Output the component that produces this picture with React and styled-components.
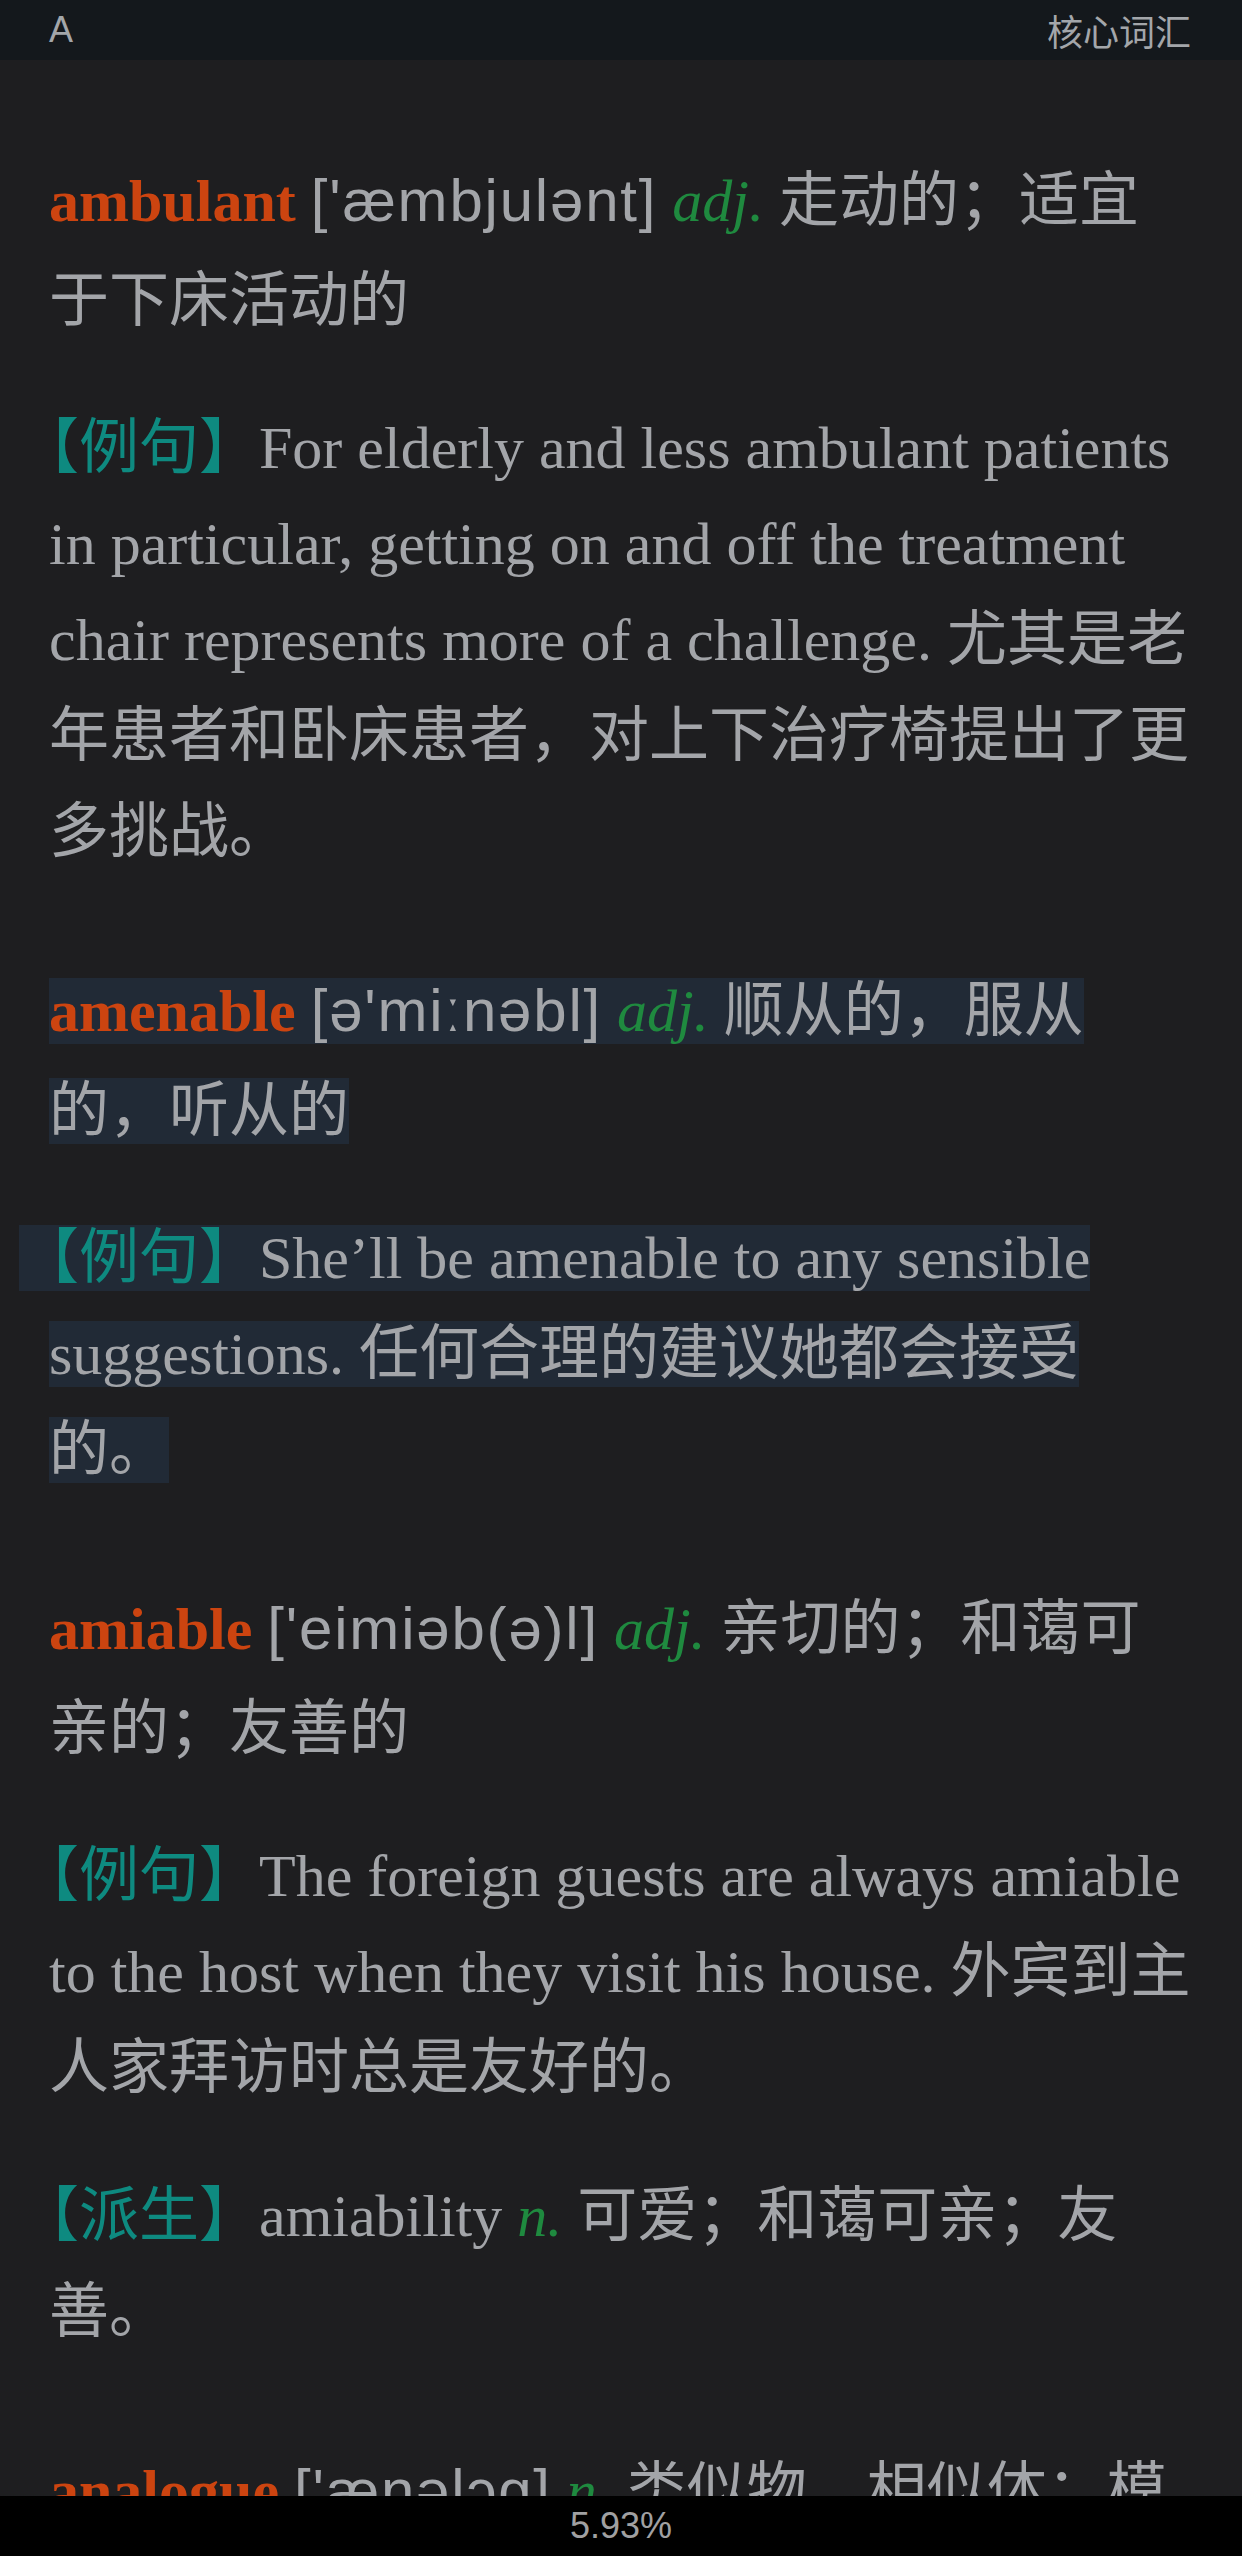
import React from 'react';
import styled, { createGlobalStyle } from 'styled-components';

const GlobalStyle = createGlobalStyle`
  html, body {
    margin: 0;
    padding: 0;
    background: #1e1e20;
  }
`;

const entries = [
  {
    id: 'ambulant',
    word: 'ambulant',
    phonetic: "['æmbjulənt]",
    pos: 'adj.',
    meaning: '走动的；适宜于下床活动的',
    notes: [
      {
        tag: '例句',
        text: 'For elderly and less ambulant patients in particular, getting on and off the treatment chair represents more of a challenge. 尤其是老年患者和卧床患者，对上下治疗椅提出了更多挑战。',
      },
    ],
  },
  {
    id: 'amenable',
    word: 'amenable',
    phonetic: "[ə'miːnəbl]",
    pos: 'adj.',
    meaning: '顺从的，服从的，听从的',
    selected: true,
    notes: [
      {
        tag: '例句',
        text: 'She’ll be amenable to any sensible suggestions. 任何合理的建议她都会接受的。',
      },
    ],
  },
  {
    id: 'amiable',
    word: 'amiable',
    phonetic: "['eimiəb(ə)l]",
    pos: 'adj.',
    meaning: '亲切的；和蔼可亲的；友善的',
    notes: [
      {
        tag: '例句',
        text: 'The foreign guests are always amiable to the host when they visit his house. 外宾到主人家拜访时总是友好的。',
      },
      {
        tag: '派生',
        word: 'amiability',
        pos: 'n.',
        text: '可爱；和蔼可亲；友善。',
      },
    ],
  },
  {
    id: 'analogue',
    word: 'analogue',
    phonetic: "['ænəlɔg]",
    pos: 'n.',
    meaning: '类似物，相似体；模拟',
    notes: [],
  },
];

const App = () => (
  <Screen>
    <GlobalStyle />
    <TopBar>
      <span>A</span>
      <span>核心词汇</span>
    </TopBar>
    <Reader>
      {entries.map(entry => {
        const Wrap = entry.selected ? Mark : React.Fragment;
        return (
          <Entry key={entry.id}>
            <Head>
              <Wrap>
                <Word>{entry.word}</Word>{' '}
                <Phonetic>{entry.phonetic}</Phonetic>{' '}
                <Pos>{entry.pos}</Pos>{' '}
                {entry.meaning}
              </Wrap>
            </Head>
            {entry.notes.map(note => (
              <Line key={note.tag}>
                <Wrap>
                  <Tag>【{note.tag}】</Tag>
                  {note.word && <>{note.word} <Pos>{note.pos}</Pos> </>}
                  {note.text}
                </Wrap>
              </Line>
            ))}
          </Entry>
        );
      })}
    </Reader>
    <BottomBar>5.93%</BottomBar>
  </Screen>
);

const Screen = styled.div`
  height: 2556px;
  display: flex;
  flex-direction: column;
  background: #1e1e20;
  overflow: hidden;
`;

const TopBar = styled.header`
  flex: none;
  height: 60px;
  display: flex;
  align-items: center;
  justify-content: space-between;
  padding: 0 51px 0 49px;
  background: #14181c;
  color: #a3a6aa;
  font-family: "Liberation Sans", "Noto Sans CJK SC", sans-serif;
  font-size: 36px;
`;

const Reader = styled.main`
  flex: 1;
  min-height: 0;
  overflow: hidden;
  padding: 88px 49px 0;
`;

const Entry = styled.section`
  & + & {
    margin-top: 78px;
  }
`;

const Line = styled.p`
  margin: 52px 0 0;
  font-family: "Liberation Serif", "Noto Sans CJK SC", serif;
  font-size: 60px;
  line-height: 96px;
  color: #a3a5a9;
  text-spacing-trim: space-all;
`;

const Head = styled(Line)`
  margin-top: 0;
  padding-top: 3px;
  line-height: 100px;

  & + ${Line} {
    margin-top: 49px;
  }
`;

const Mark = styled.span`
  background: #212a36;
`;

const Word = styled.b`
  color: #cc4410;
  font-weight: 700;
`;

const Phonetic = styled.span`
  font-family: "Liberation Sans", "DejaVu Sans", "Noto Sans CJK SC", sans-serif;
  letter-spacing: 1.8px;
`;

const Pos = styled.i`
  color: #1f8a3f;
`;

const Tag = styled.span`
  margin-left: -0.5em;
  color: #0e8a80;
  background: inherit;
`;

const BottomBar = styled.footer`
  flex: none;
  height: 60px;
  display: flex;
  align-items: center;
  justify-content: center;
  background: #000;
  color: #a0a0a2;
  font-family: "Liberation Sans", sans-serif;
  font-size: 36px;
`;

export default App;
